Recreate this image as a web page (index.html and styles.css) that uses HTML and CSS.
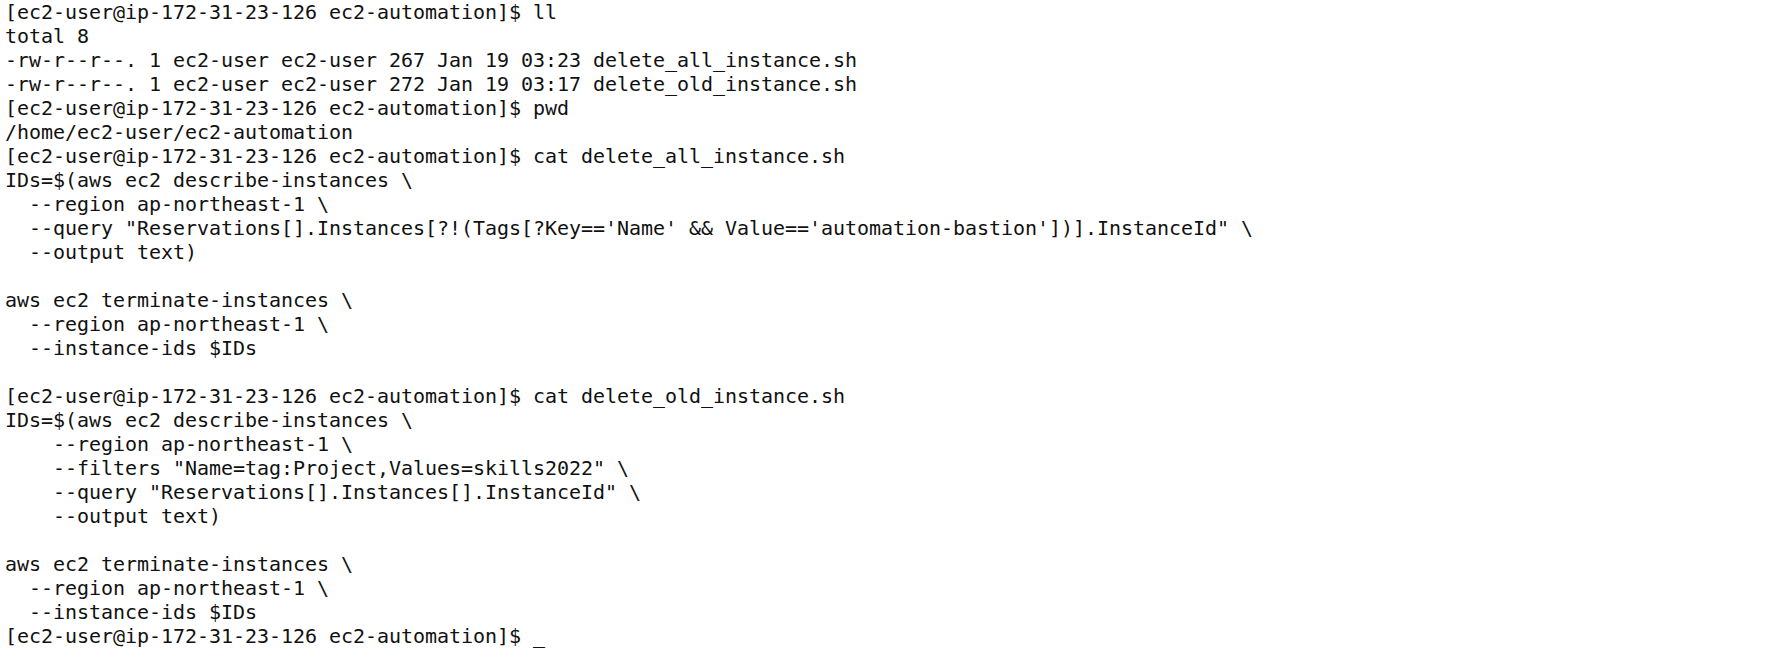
FILE: index.html
```html
<!DOCTYPE html>
<html>
<head>
<meta charset="utf-8">
<link rel="stylesheet" href="styles.css">
</head>
<body>
<pre class="term">[ec2-user@ip-172-31-23-126 ec2-automation]$ ll
total 8
-rw-r--r--. 1 ec2-user ec2-user 267 Jan 19 03:23 delete_all_instance.sh
-rw-r--r--. 1 ec2-user ec2-user 272 Jan 19 03:17 delete_old_instance.sh
[ec2-user@ip-172-31-23-126 ec2-automation]$ pwd
/home/ec2-user/ec2-automation
[ec2-user@ip-172-31-23-126 ec2-automation]$ cat delete_all_instance.sh
IDs=$(aws ec2 describe-instances \
  --region ap-northeast-1 \
  --query "Reservations[].Instances[?!(Tags[?Key=='Name' &amp;&amp; Value=='automation-bastion'])].InstanceId" \
  --output text)

aws ec2 terminate-instances \
  --region ap-northeast-1 \
  --instance-ids $IDs

[ec2-user@ip-172-31-23-126 ec2-automation]$ cat delete_old_instance.sh
IDs=$(aws ec2 describe-instances \
    --region ap-northeast-1 \
    --filters "Name=tag:Project,Values=skills2022" \
    --query "Reservations[].Instances[].InstanceId" \
    --output text)

aws ec2 terminate-instances \
  --region ap-northeast-1 \
  --instance-ids $IDs
[ec2-user@ip-172-31-23-126 ec2-automation]$ _</pre>
</body>
</html>
```

FILE: styles.css
```css
html, body {
  margin: 0;
  padding: 0;
  background: #ffffff;
}
.term {
  margin: 0;
  padding: 0 0 0 5px;
  font-family: "DejaVu Sans Mono", monospace;
  font-size: 20px;
  letter-spacing: -0.04px;
  line-height: 24px;
  color: #111111;
  white-space: pre;
}
```
